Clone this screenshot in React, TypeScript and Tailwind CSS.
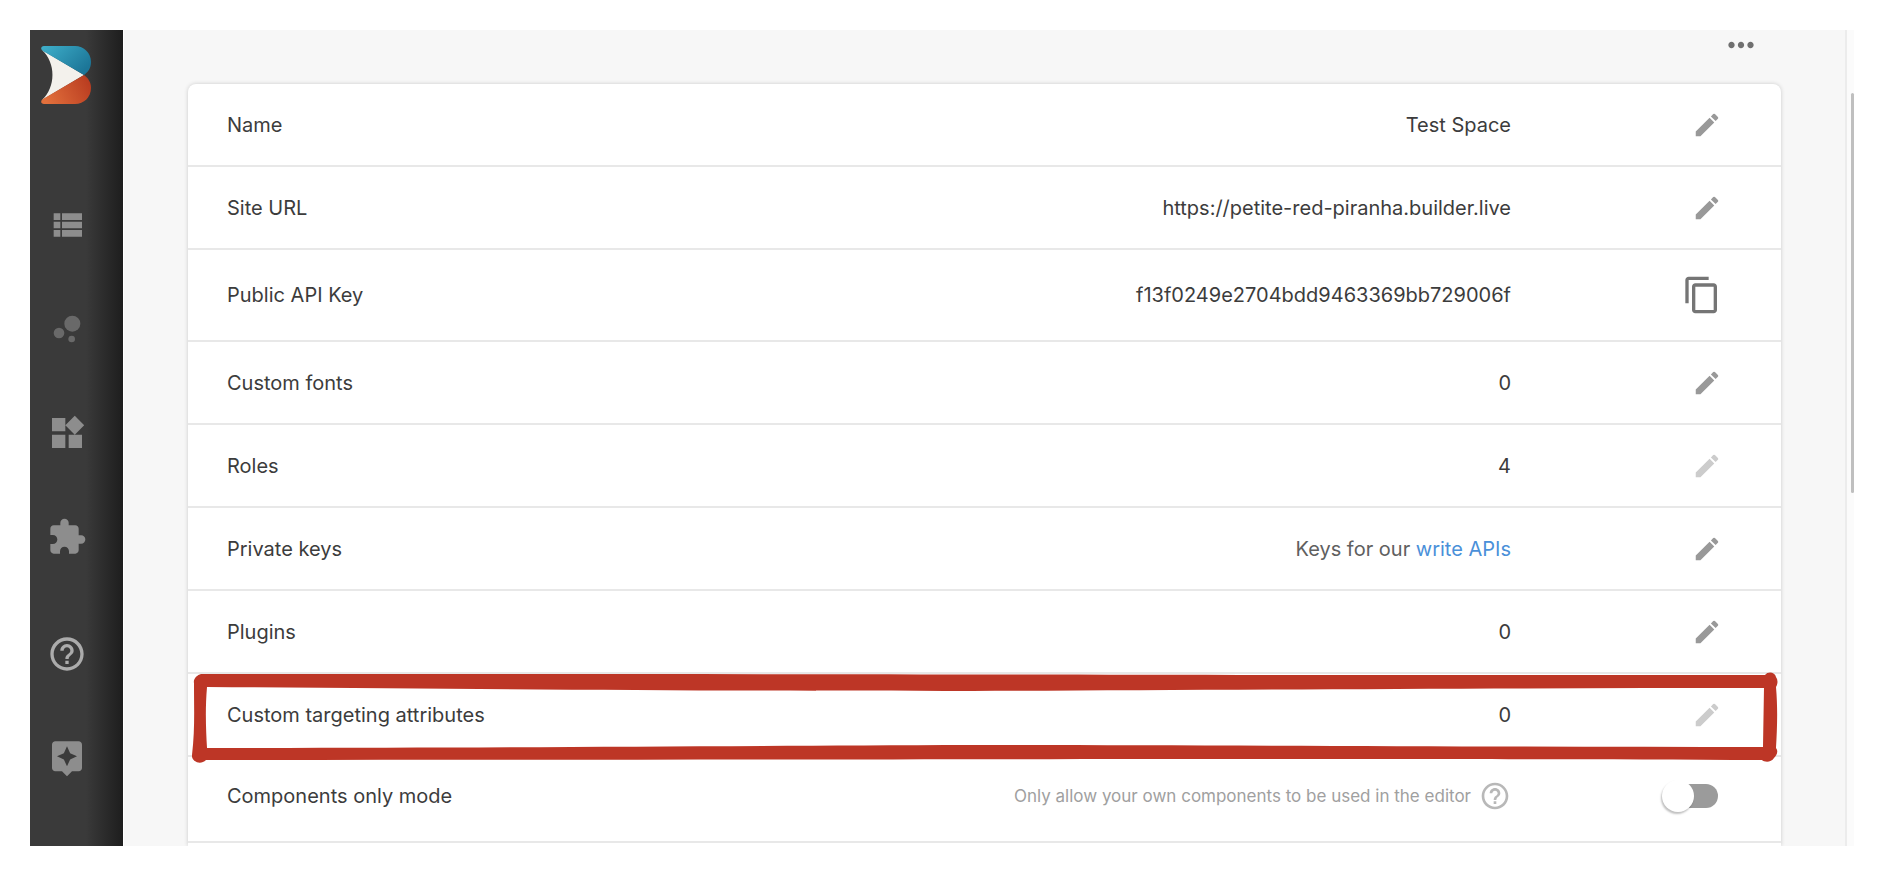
import type { ReactNode } from "react";
import {
  MdAssistant,
  MdBubbleChart,
  MdContentCopy,
  MdEdit,
  MdExtension,
  MdHelpOutline,
  MdMoreHoriz,
  MdWidgets,
} from "react-icons/md";

function ListIcon({ size }: { size: number }) {
  return (
    <svg width={size} height={size} viewBox="0 0 24 24" fill="currentColor" aria-hidden="true">
      <path d="M4 14h4v-4H4v4zm0 5h4v-4H4v4zM4 9h4V5H4v4zm5 5h12v-4H9v4zm0 5h12v-4H9v4zM9 5v4h12V5H9z" />
    </svg>
  );
}

const navItems = [
  { label: "Content", icon: ListIcon, className: "text-[#8d8d8d]" },
  { label: "Insights", icon: MdBubbleChart, className: "text-[#696969]" },
  { label: "Models", icon: MdWidgets, className: "text-[#8d8d8d]" },
  { label: "Integrations", icon: MdExtension, className: "text-[#8d8d8d]" },
  { label: "Help", icon: MdHelpOutline, className: "text-[#ababab] mt-[13px]" },
  { label: "What's new", icon: MdAssistant, className: "text-[#8d8d8d]" },
];

function Logo() {
  return (
    <svg width="50" height="58" viewBox="0 0 50 58" aria-hidden="true">
      <defs>
        <linearGradient id="logo-top" x1="0" y1="0" x2="1" y2="0.6">
          <stop offset="0" stopColor="#3fb0cb" />
          <stop offset="1" stopColor="#1c7698" />
        </linearGradient>
        <linearGradient id="logo-bottom" x1="0" y1="0.6" x2="1" y2="0.3">
          <stop offset="0" stopColor="#e2703c" />
          <stop offset="1" stopColor="#b93c20" />
        </linearGradient>
      </defs>
      <path d="M1 4 L43 29 L1 54 C15 41 15 17 1 4Z" fill="#f3f1ec" />
      <path
        d="M3 0 H34 C43 0 50 7 50 16 C50 22 47 26 43 29 L2 5 C-1 3 0 0 3 0Z"
        fill="url(#logo-top)"
      />
      <path
        d="M3 58 H34 C43 58 50 51 50 42 C50 36 47 32 43 29 L2 53 C-1 55 0 58 3 58Z"
        fill="url(#logo-bottom)"
      />
    </svg>
  );
}

function Sidebar() {
  return (
    <nav className="flex w-[93px] shrink-0 flex-col bg-linear-to-r from-[#3a3a3a] from-60% to-[#1e1e1e]">
      <a href="#" aria-label="Home" className="mt-4 ml-[11px] block">
        <Logo />
      </a>
      <ul className="mt-[101px] ml-[17px] flex flex-col gap-16">
        {navItems.map(({ label, icon: Icon, className }) => (
          <li key={label} className={className}>
            <a href="#" aria-label={label} className="block w-10">
              <Icon size={40} />
            </a>
          </li>
        ))}
      </ul>
    </nav>
  );
}

function Row({
  label,
  children,
  action,
  className = "h-[83px]",
}: {
  label: ReactNode;
  children: ReactNode;
  action: ReactNode;
  className?: string;
}) {
  return (
    <li
      className={`relative flex items-center border-b-2 border-[#e8e8e8] pr-[59px] pl-[39px] ${className}`}
    >
      <div className="flex-1">{label}</div>
      <div>{children}</div>
      <div className="flex w-[211px] justify-end">{action}</div>
    </li>
  );
}

function EditButton({ label, disabled }: { label: string; disabled?: boolean }) {
  return (
    <button
      type="button"
      aria-label={`Edit ${label}`}
      disabled={disabled}
      className="text-[#999999] disabled:text-[#cccccc]"
    >
      <MdEdit size={30} />
    </button>
  );
}

/* Hand-drawn marker frame around the highlighted row */
function Marker() {
  return (
    <svg
      className="pointer-events-none absolute -top-1 left-1 h-[94px] w-[calc(100%-6px)]"
      viewBox="0 0 1586 94"
      preserveAspectRatio="none"
      aria-hidden="true"
    >
      <path
        fill="#bd3626"
        fillRule="evenodd"
        d="M9 4 C400 4 700 4 1100 5 L1572 5 C1575 1 1582 2 1583 7 C1585 10 1585 13 1583 17 C1585 40 1584 60 1583 78 C1586 82 1583 86 1581 88 C1578 93 1571 92 1569 90 C1400 89 1200 89 1100 89 C800 89 400 90 14 90 C8 96 -1 91 0 85 C3 60 2 40 2 13 C1 9 5 5 9 4Z
           M15 17 C300 19 500 21 780 21 C1000 20 1300 18 1571 18 L1570 77 C1300 77 1000 75 780 75 C500 76 300 78 15 78 C14 60 13 40 15 17Z"
      />
    </svg>
  );
}

export default function App() {
  return (
    <div className="bg-white p-[30px] font-['Inter',sans-serif] text-[20px] leading-7 text-[#3c3c3c]">
      <div className="flex">
        <Sidebar />
        <main className="ml-px flex-1 overflow-hidden border-r-2 border-[#ececec] bg-[#f7f7f7] pr-16 pl-16">
          <div className="flex h-[54px] items-start justify-end pr-[21px]">
            <button type="button" aria-label="More options" className="-mt-1 text-[#707070]">
              <MdMoreHoriz size={38} />
            </button>
          </div>
          <ul className="rounded-t-lg bg-white pb-[3px] shadow-[0_0_4px_rgba(0,0,0,0.18)]">
            <Row label="Name" action={<EditButton label="name" />}>
              Test Space
            </Row>
            <Row label="Site URL" action={<EditButton label="site URL" />}>
              https://petite-red-piranha.builder.live
            </Row>
            <Row
              label="Public API Key"
              className="h-[92px]"
              action={
                <button type="button" aria-label="Copy public API key" className="text-[#757575]">
                  <MdContentCopy size={40} />
                </button>
              }
            >
              f13f0249e2704bdd9463369bb729006f
            </Row>
            <Row label="Custom fonts" action={<EditButton label="custom fonts" />}>
              0
            </Row>
            <Row label="Roles" action={<EditButton label="roles" disabled />}>
              4
            </Row>
            <Row label="Private keys" action={<EditButton label="private keys" />}>
              <span className="text-[#606060]">
                Keys for our{" "}
                <a href="#" className="text-[#4a90d9]">
                  write APIs
                </a>
              </span>
            </Row>
            <Row label="Plugins" action={<EditButton label="plugins" />}>
              0
            </Row>
            <Row
              label="Custom targeting attributes"
              action={
                <>
                  <EditButton label="custom targeting attributes" disabled />
                  <Marker />
                </>
              }
            >
              0
            </Row>
            <Row
              label={<label htmlFor="components-only">Components only mode</label>}
              className="h-[86px] pb-[7px]"
              action={
                <input
                  id="components-only"
                  type="checkbox"
                  className="relative mr-1 h-6 w-11 appearance-none rounded-full bg-[#9b9b9b] before:absolute before:-top-1 before:-left-3 before:size-8 before:rounded-full before:bg-white before:shadow-[-1px_2px_2px_rgba(0,0,0,0.25)]"
                />
              }
            >
              <span className="flex items-center gap-2 text-[17px] text-[#a0a0a0]">
                Only allow your own components to be used in the editor
                <MdHelpOutline size={32} className="text-[#b8b8b8]" />
              </span>
            </Row>
          </ul>
        </main>
        {/* Scroll track */}
        <div className="flex w-[7px] flex-col items-end bg-[#fbfbfb] pt-[63px]">
          <div className="h-[400px] w-[3px] rounded-full bg-[#bfbfbf]" />
        </div>
      </div>
    </div>
  );
}
